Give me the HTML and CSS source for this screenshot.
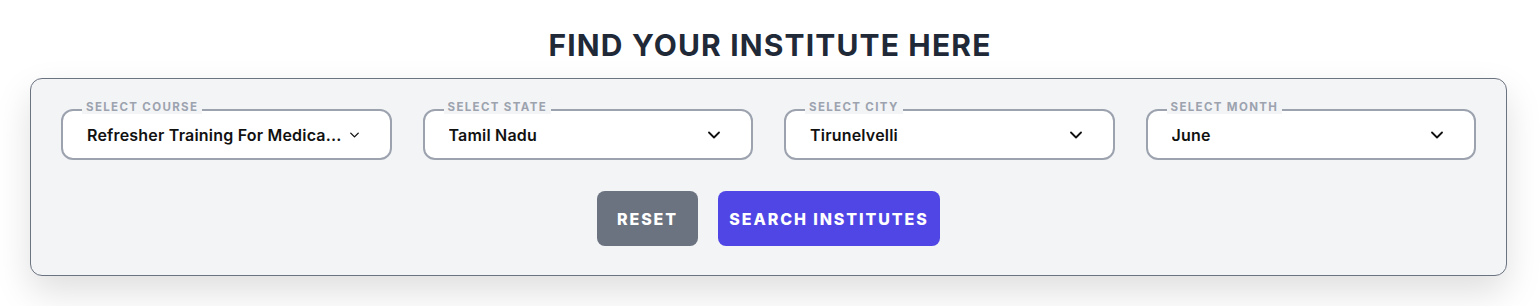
FILE: index.html
```html
<html><head>
<meta charset="utf-8"><link rel="stylesheet" href="styles.css">
</head><body><div class="finder">
	<h2 class="finder_title">FIND YOUR INSTITUTE HERE</h2>
	<div class="finder_card">
		<div class="fields">
			<div class="field">
				<span class="field_label">SELECT COURSE</span>
				<div class="field_value">
					<span class="value_text">Refresher Training For Medica...</span>
					<svg class="chev chev_small" viewBox="0 0 12 8"><path d="M1 1.5l5 5 5-5"/></svg>
				</div>
			</div>
			<div class="field">
				<span class="field_label">SELECT STATE</span>
				<div class="field_value">
					<span class="value_text">Tamil Nadu</span>
					<svg class="chev" viewBox="0 0 12 8"><path d="M1 1.5l5 5 5-5"/></svg>
				</div>
			</div>
			<div class="field">
				<span class="field_label">SELECT CITY</span>
				<div class="field_value">
					<span class="value_text">Tirunelvelli</span>
					<svg class="chev" viewBox="0 0 12 8"><path d="M1 1.5l5 5 5-5"/></svg>
				</div>
			</div>
			<div class="field">
				<span class="field_label">SELECT MONTH</span>
				<div class="field_value">
					<span class="value_text">June</span>
					<svg class="chev" viewBox="0 0 12 8"><path d="M1 1.5l5 5 5-5"/></svg>
				</div>
			</div>
		</div>
		<div class="actions">
			<button class="btn btn_reset">RESET</button>
			<button class="btn btn_search">SEARCH INSTITUTES</button>
		</div>
	</div><!-- finder_card end -->
</div></body></html>
```

FILE: styles.css
```css
body {margin: 0;background: #fff;font-family: Inter, "Noto Sans", sans-serif;}
.finder {padding-top: 27px;}
.finder_title {margin: 0 0 15px 0;text-align: center;font-size: 30px;line-height: 36px;font-weight: 700;color: #1f2937;letter-spacing: 1.15px;}
.finder_card {margin: 0 33px 0 30px;background: #f3f4f6;border: 1px solid #6b7280;border-radius: 12px;padding: 30px 30px 29px 30px;box-shadow: 0 16px 36px rgba(0,0,0,0.13);}
.fields {display: grid;grid-template-columns: repeat(4, minmax(0, 1fr));gap: 31px;}
.field {position: relative;height: 51px;box-sizing: border-box;border: 2px solid #9ca3af;border-radius: 12px;background: #fff;}
.field_label {position: absolute;top: -11px;left: 19px;padding: 0 4px;background: #f3f4f6;font-size: 11.5px;line-height: 14px;font-weight: 700;letter-spacing: 1.35px;color: #9ca3af;}
.field_value {display: flex;align-items: center;justify-content: space-between;height: 100%;padding: 0 31px 0 24px;font-size: 16px;font-weight: 600;letter-spacing: 0.2px;color: #111;}
.value_text {white-space: nowrap;overflow: hidden;text-overflow: ellipsis;}
.chev {width: 12px;height: 8px;flex: none;fill: none;stroke: #111;stroke-width: 1.8;stroke-linecap: round;stroke-linejoin: round;}
.chev_small {width: 9px;height: 6px;margin-left: 4px;}
.actions {display: flex;justify-content: center;gap: 20px;margin-top: 31px;}
.btn {height: 55px;border: 0;border-radius: 8px;color: #fff;font-family: Inter, "Noto Sans", sans-serif;font-size: 16px;font-weight: 800;letter-spacing: 1.9px;cursor: pointer;}
.btn_reset {width: 101px;background: #6b7280;}
.btn_search {width: 222px;background: #4f46e5;}
```
